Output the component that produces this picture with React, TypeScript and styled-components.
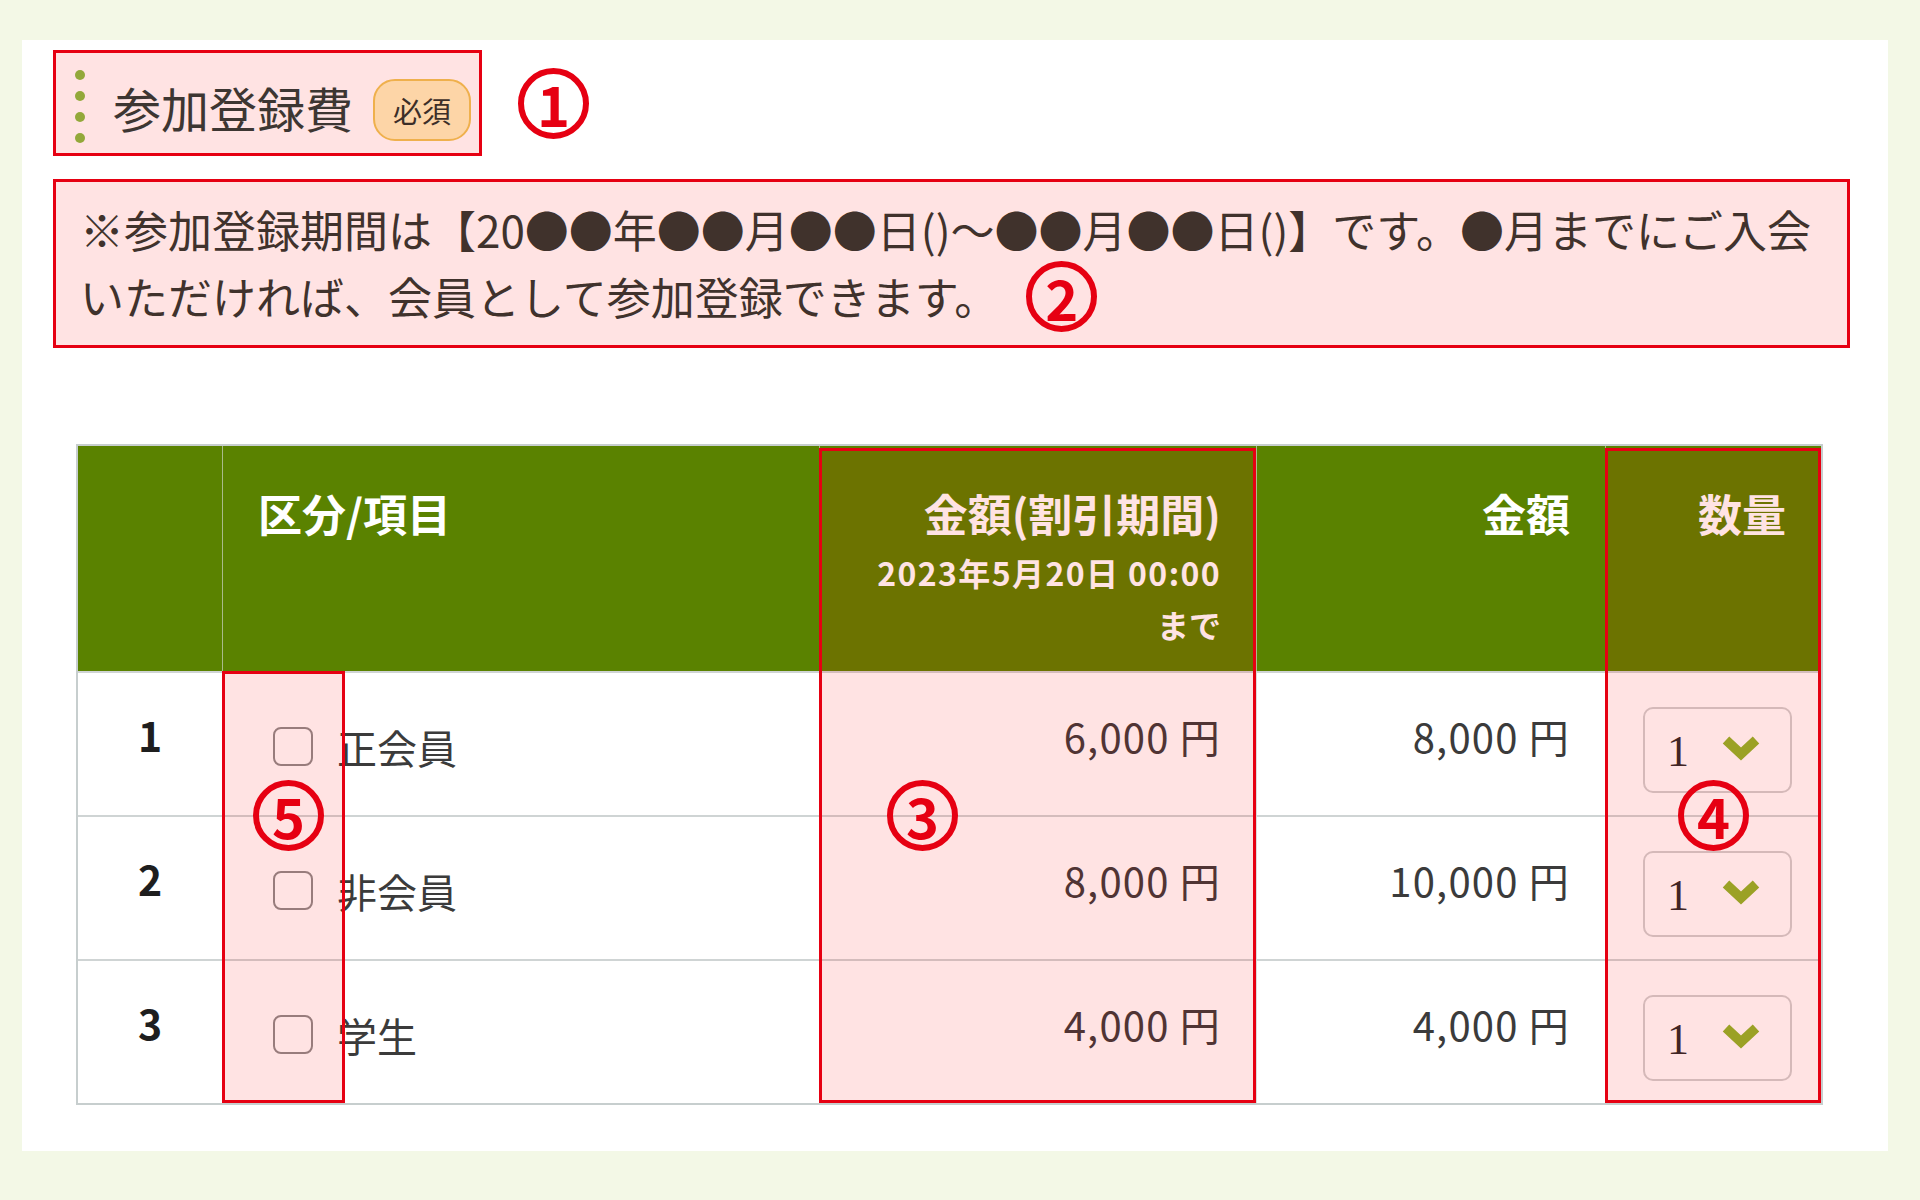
import React from 'react';
import styled, { createGlobalStyle } from 'styled-components';

const GlobalStyle = createGlobalStyle`
  html, body {
    margin: 0;
    padding: 0;
  }
  body {
    background: #f3f8e6;
    font-family: "Noto Sans CJK JP", "Noto Sans", sans-serif;
    color: #3e3531;
  }
  * {
    box-sizing: border-box;
  }
`;

const Page = styled.div`
  min-height: 100vh;
  padding: 40px 32px 49px 22px;
`;

const Card = styled.section`
  background: #fff;
  padding: 10px 38px 46px 31px;
`;

// red annotation frame
const Marked = styled.div`
  border: 3px solid #e60012;
  background: #ffe3e3;
`;

const Marker = styled.span`
  display: inline-flex;
  align-items: center;
  justify-content: center;
  flex-shrink: 0;
  width: 71px;
  height: 71px;
  border: 6px solid #e60012;
  border-radius: 50%;
  color: #e60012;
  font-family: "Noto Sans CJK JP", sans-serif;
  font-size: 56px;
  font-weight: 700;
  line-height: 1;
`;

const InlineMarker = styled(Marker)`
  vertical-align: top;
  margin: -2px 0 -2px 28px;
`;

const TitleRow = styled.div`
  display: flex;
  align-items: center;
  gap: 36px;
`;

const TitleBox = styled(Marked)`
  display: flex;
  align-items: center;
  height: 106px;
  padding: 0 8px 0 19px;
`;

const Dots = styled.div`
  display: flex;
  flex-direction: column;
  gap: 11px;
  margin: 6px 28px 0 0;
`;

const Dot = styled.span`
  width: 10px;
  height: 10px;
  border-radius: 50%;
  background: #93a83a;
`;

const Title = styled.h2`
  margin: 7px 0 0;
  font-size: 48px;
  font-weight: 400;
  line-height: 1;
  color: #3d3632;
`;

const Badge = styled.span`
  margin: 14px 0 0 20px;
  height: 62px;
  padding: 0 18px;
  border: 2px solid #efb04c;
  border-radius: 22px;
  background: #fdd5a7;
  color: #3c2e28;
  font-size: 29px;
  line-height: 58px;
`;

const Note = styled(Marked)`
  margin-top: 23px;
  padding: 14px 24px 15px;
  font-size: 44px;
  line-height: 67px;
  color: #40322c;
`;

const Table = styled.div`
  display: grid;
  grid-template-columns: 144px 597px 437px 349px 216px;
  grid-template-rows: 225px repeat(3, 144px);
  width: max-content;
  margin: 96px 0 0 23px;
  border: 2px solid #c7cece;
`;

type Align = 'left' | 'right' | 'center';

const HeadCell = styled.div<{ $col: number; $align?: Align }>`
  grid-column: ${p => p.$col};
  grid-row: 1;
  padding: 34px 35px 0;
  background: #5a8200;
  color: #fff;
  font-weight: 700;
  text-align: ${p => p.$align ?? 'right'};
  border-left: ${p => (p.$col > 1 ? '1px solid #a9bb8a' : 'none')};
`;

const HeadTitle = styled.div`
  font-size: 44px;
  line-height: 66px;
`;

const HeadSub = styled.div<{ $spread?: boolean }>`
  font-size: 32px;
  line-height: 52px;
  letter-spacing: ${p => (p.$spread ? '1.4px' : '0')};
`;

const BodyCell = styled.div<{ $col: number; $row: number; $align?: Align }>`
  grid-column: ${p => p.$col};
  grid-row: ${p => p.$row};
  padding: 33px 35px 0;
  border-top: 2px solid #cfd4d4;
  border-left: ${p => (p.$col > 1 ? '1px solid #d9dddd' : 'none')};
  font-size: 40px;
  line-height: 60px;
  color: #3b3b3b;
  text-align: ${p => p.$align ?? 'right'};
`;

const PriceCell = styled(BodyCell)`
  letter-spacing: 1.2px;
`;

const NumberCell = styled(BodyCell)`
  padding: 31px 0 0;
  font-size: 41px;
  font-weight: 700;
  color: #1e1e1e;
`;

const ItemCell = styled(BodyCell)`
  display: flex;
  align-items: flex-start;
  padding: 44px 0 0 50px;
`;

const Checkbox = styled.span`
  width: 40px;
  height: 39px;
  margin: 10px 24px 0 0;
  border: 2px solid #8c8c8c;
  border-radius: 8px;
  background: #fff;
`;

const QtyCell = styled(BodyCell)`
  display: flex;
  align-items: flex-start;
  justify-content: flex-end;
  padding: 34px 29px 0 0;
`;

const Select = styled.div`
  display: flex;
  align-items: center;
  gap: 32px;
  width: 149px;
  height: 86px;
  padding: 0 0 4px 22px;
  border: 2px solid #d0d0d0;
  border-radius: 10px;
  background: #fff;
`;

const SelectValue = styled.span`
  font-family: "Liberation Serif", "DejaVu Serif", serif;
  font-size: 44px;
  line-height: 1;
  color: #2a2a2a;
  padding-top: 8px;
`;

const Highlight = styled.div<{ $col: number; $rows: string; $width?: number }>`
  grid-column: ${p => p.$col};
  grid-row: ${p => p.$rows};
  z-index: 1;
  ${p => (p.$width ? `width: ${p.$width}px;` : '')}
  margin-top: ${p => (p.$rows.startsWith('1') ? '2px' : '0')};
  border: 3px solid #e60012;
  background: rgba(255, 0, 0, 0.11);
  pointer-events: none;
`;

const MarkerSlot = styled.div<{ $col: number; $pad: number }>`
  grid-column: ${p => p.$col};
  grid-row: 2 / 4;
  z-index: 2;
  display: flex;
  align-items: center;
  padding-left: ${p => p.$pad}px;
  pointer-events: none;
`;

const Chevron = () => (
  <svg width="40" height="26" viewBox="0 0 40 26" aria-hidden="true">
    <polyline
      points="5,5 20,19 35,5"
      fill="none"
      stroke="#8fb52a"
      strokeWidth="9.5"
      strokeLinejoin="miter"
    />
  </svg>
);

const rows = [
  { no: 1, name: '正会員', early: '6,000 円', normal: '8,000 円' },
  { no: 2, name: '非会員', early: '8,000 円', normal: '10,000 円' },
  { no: 3, name: '学生', early: '4,000 円', normal: '4,000 円' },
];

const App = () => {
  return (
    <>
      <GlobalStyle />
      <Page>
        <Card>
          <TitleRow>
            <TitleBox>
              <Dots>
                <Dot />
                <Dot />
                <Dot />
                <Dot />
              </Dots>
              <Title>参加登録費</Title>
              <Badge>必須</Badge>
            </TitleBox>
            <Marker>1</Marker>
          </TitleRow>

          <Note>
            ※参加登録期間は【20●●年●●月●●日()〜●●月●●日()】です。●月までにご入会
            <br />
            いただければ、会員として参加登録できます。
            <InlineMarker>2</InlineMarker>
          </Note>

          <Table>
            <HeadCell $col={1} />
            <HeadCell $col={2} $align="left">
              <HeadTitle>区分/項目</HeadTitle>
            </HeadCell>
            <HeadCell $col={3}>
              <HeadTitle>金額(割引期間)</HeadTitle>
              <HeadSub $spread>2023年5月20日 00:00</HeadSub>
              <HeadSub>まで</HeadSub>
            </HeadCell>
            <HeadCell $col={4}>
              <HeadTitle>金額</HeadTitle>
            </HeadCell>
            <HeadCell $col={5}>
              <HeadTitle>数量</HeadTitle>
            </HeadCell>

            {rows.map((r, i) => (
              <React.Fragment key={r.no}>
                <NumberCell $col={1} $row={i + 2} $align="center">
                  {r.no}
                </NumberCell>
                <ItemCell $col={2} $row={i + 2}>
                  <Checkbox />
                  {r.name}
                </ItemCell>
                <PriceCell $col={3} $row={i + 2}>
                  {r.early}
                </PriceCell>
                <PriceCell $col={4} $row={i + 2}>
                  {r.normal}
                </PriceCell>
                <QtyCell $col={5} $row={i + 2}>
                  <Select>
                    <SelectValue>1</SelectValue>
                    <Chevron />
                  </Select>
                </QtyCell>
              </React.Fragment>
            ))}

            <Highlight $col={2} $rows="2 / 5" $width={123} />
            <Highlight $col={3} $rows="1 / 5" />
            <Highlight $col={5} $rows="1 / 5" />

            <MarkerSlot $col={2} $pad={31}>
              <Marker>5</Marker>
            </MarkerSlot>
            <MarkerSlot $col={3} $pad={68}>
              <Marker>3</Marker>
            </MarkerSlot>
            <MarkerSlot $col={5} $pad={73}>
              <Marker>4</Marker>
            </MarkerSlot>
          </Table>
        </Card>
      </Page>
    </>
  );
};

export default App;
